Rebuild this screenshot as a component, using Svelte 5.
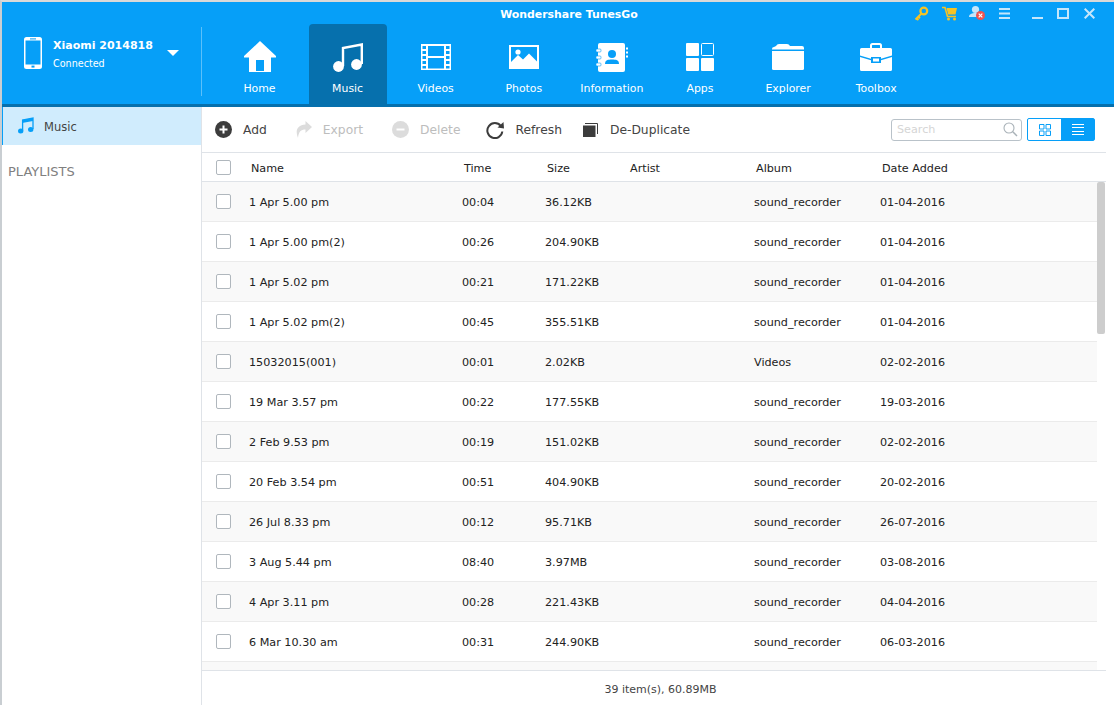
<script>
  const navItems = ["Home", "Music", "Videos", "Photos", "Information", "Apps", "Explorer", "Toolbox"];

  const tracks = [
    { name: "1 Apr 5.00 pm", time: "00:04", size: "36.12KB", album: "sound_recorder", date: "01-04-2016" },
    { name: "1 Apr 5.00 pm(2)", time: "00:26", size: "204.90KB", album: "sound_recorder", date: "01-04-2016" },
    { name: "1 Apr 5.02 pm", time: "00:21", size: "171.22KB", album: "sound_recorder", date: "01-04-2016" },
    { name: "1 Apr 5.02 pm(2)", time: "00:45", size: "355.51KB", album: "sound_recorder", date: "01-04-2016" },
    { name: "15032015(001)", time: "00:01", size: "2.02KB", album: "Videos", date: "02-02-2016" },
    { name: "19 Mar 3.57 pm", time: "00:22", size: "177.55KB", album: "sound_recorder", date: "19-03-2016" },
    { name: "2 Feb 9.53 pm", time: "00:19", size: "151.02KB", album: "sound_recorder", date: "02-02-2016" },
    { name: "20 Feb 3.54 pm", time: "00:51", size: "404.90KB", album: "sound_recorder", date: "20-02-2016" },
    { name: "26 Jul 8.33 pm", time: "00:12", size: "95.71KB", album: "sound_recorder", date: "26-07-2016" },
    { name: "3 Aug 5.44 pm", time: "08:40", size: "3.97MB", album: "sound_recorder", date: "03-08-2016" },
    { name: "4 Apr 3.11 pm", time: "00:28", size: "221.43KB", album: "sound_recorder", date: "04-04-2016" },
    { name: "6 Mar 10.30 am", time: "00:31", size: "244.90KB", album: "sound_recorder", date: "06-03-2016" }
  ];
</script>

<div class="window">
  <header class="header">
    <div class="titlebar">
      <span></span>
      <div class="title">Wondershare TunesGo</div>
      <div class="controls">
        <svg width="15" height="15" viewBox="0 0 15 15" aria-label="key">
          <circle cx="9.8" cy="5" r="3.4" fill="none" stroke="#f7c325" stroke-width="2.2" />
          <path d="M7.5 7.5 L1.5 13.5 M2.5 12.5 L4.5 14 M4.3 10.7 L6 12.2" fill="none" stroke="#f7c325" stroke-width="2" />
        </svg>
        <svg class="cart" width="16" height="15" viewBox="0 0 16 15" aria-label="cart">
          <path d="M0 1.5 H3 L5.5 10.5 H14" fill="none" stroke="#f7c325" stroke-width="1.6" />
          <path d="M4.5 2 H15 L13.5 8.5 H6.2 Z" fill="#f7c325" />
          <circle cx="6.5" cy="13" r="1.5" fill="#f7c325" />
          <circle cx="12.5" cy="13" r="1.5" fill="#f7c325" />
        </svg>
        <svg class="user" width="17" height="16" viewBox="0 0 17 16" aria-label="account">
          <circle cx="6.5" cy="4.5" r="3.6" fill="#c5e6fb" />
          <path d="M0 12 C0 9 3 8 6.5 8 C10 8 12 9 12 12 Z" fill="#c5e6fb" />
          <circle cx="11.5" cy="10.5" r="4.5" fill="#ef5350" />
          <path d="M9.7 8.7 L13.3 12.3 M13.3 8.7 L9.7 12.3" stroke="#fff" stroke-width="1.2" />
        </svg>
        <svg class="menu" width="12" height="11" viewBox="0 0 12 11" aria-label="menu">
          <path d="M0 1 H11 M0 5.5 H11 M0 10 H11" stroke="#c5e6fb" stroke-width="2" />
        </svg>
        <svg class="min" width="11" height="12" viewBox="0 0 11 12" aria-label="minimize">
          <path d="M0 11 H11" stroke="#c5e6fb" stroke-width="2" />
        </svg>
        <svg class="max" width="12" height="11" viewBox="0 0 12 11" aria-label="maximize">
          <rect x="1" y="1" width="10" height="9" fill="none" stroke="#c5e6fb" stroke-width="2" />
        </svg>
        <svg class="close" width="11" height="11" viewBox="0 0 11 11" aria-label="close">
          <path d="M.7 .7 L10.3 10.3 M10.3 .7 L.7 10.3" stroke="#c5e6fb" stroke-width="2" />
        </svg>
      </div>
    </div>

    <div class="headbar">
      <div class="device">
        <svg class="phone" width="18" height="32" viewBox="0 0 18 32">
          <rect width="18" height="32" rx="2.5" fill="#fff" />
          <rect x="1.5" y="3.5" width="15" height="24" fill="#069ff8" />
          <rect x="6" y="1.4" width="6" height="1" fill="#069ff8" />
          <rect x="7.5" y="28.6" width="3" height="2" fill="#069ff8" />
        </svg>
        <div class="device-text">
          <div class="device-name">Xiaomi 2014818</div>
          <div class="device-state">Connected</div>
        </div>
        <span class="caret"></span>
      </div>

      <nav class="nav">
        {#each navItems as item}
          <div class="nav-item" class:active={item === "Music"}>
            <div class="nav-icon">
              {#if item === "Home"}
                <svg width="32" height="32" viewBox="0 0 32 32">
                  <path d="M16 0 L32 15 L32 16.500 L27 16.500 L27 31 L5 31 L5 16.500 L0 16.500 L0 15 Z" fill="#fff" />
                  <rect x="12" y="19" width="8" height="11" fill="#069ff8" />
                </svg>
              {:else if item === "Music"}
                <svg width="30" height="30" viewBox="0 0 30 30">
                  <path d="M10 24 V6 L28.800 2.500 V22" fill="none" stroke="#fff" stroke-width="2.400" />
                  <circle cx="5.500" cy="24.500" r="5.400" fill="#fff" />
                  <circle cx="23.500" cy="22.500" r="5.400" fill="#fff" />
                </svg>
              {:else if item === "Videos"}
                <svg width="30" height="26" viewBox="1 1 30 26">
                  <path fill-rule="evenodd" fill="#fff" d="M1 1 H31 V27 H1 Z M2.5 3 V6 H6 V3 Z M2.5 8 V11 H6 V8 Z M2.5 13 V16 H6 V13 Z M2.5 18 V21 H6 V18 Z M2.5 23 V25.500 H6 V23 Z M26 3 V6 H29.500 V3 Z M26 8 V11 H29.500 V8 Z M26 13 V16 H29.500 V13 Z M26 18 V21 H29.500 V18 Z M26 23 V25.500 H29.500 V23 Z M8 3 V13 H24 V3 Z M8 15 V25.500 H24 V15 Z" />
                </svg>
              {:else if item === "Photos"}
                <svg width="30" height="24" viewBox="0 0 30 24">
                  <path fill-rule="evenodd" fill="#fff" d="M0 0 H30 V24 H0 Z M2 2 V17 L9 10 L14 14.500 L20 8.500 L28 16.500 V2 Z" />
                  <circle cx="9" cy="7" r="2.600" fill="#fff" />
                </svg>
              {:else if item === "Information"}
                <svg width="32" height="29" viewBox="0 0 32 29">
                  <rect x="2" y="0" width="27" height="29" rx="2" fill="#fff" />
                  <rect x="0" y="6" width="5" height="3" rx="1" fill="#fff" stroke="#069ff8" stroke-width=".6" />
                  <rect x="0" y="13" width="5" height="3" rx="1" fill="#fff" stroke="#069ff8" stroke-width=".6" />
                  <rect x="0" y="20" width="5" height="3" rx="1" fill="#fff" stroke="#069ff8" stroke-width=".6" />
                  <path d="M30 4.500 H32 V6.500 H30 Z M30 8.500 H32 V10.500 H30 Z M30 12.500 H32 V14.500 H30 Z" fill="#fff" />
                  <circle cx="16" cy="11" r="4" fill="#069ff8" />
                  <path d="M9 21 C9 17 12 16.500 16 16.500 C20 16.500 23 17 23 21 Z" fill="#069ff8" />
                </svg>
              {:else if item === "Apps"}
                <svg width="28" height="28" viewBox="0 0 28 28">
                  <rect x="0" y="0" width="13" height="13" rx="1" fill="#fff" />
                  <rect x="15.500" y=".5" width="12" height="12" rx="1" fill="none" stroke="#fff" />
                  <rect x="0" y="15" width="13" height="13" rx="1" fill="#fff" />
                  <rect x="15" y="15" width="13" height="13" rx="1" fill="#fff" />
                </svg>
              {:else if item === "Explorer"}
                <svg width="32" height="26" viewBox="0 0 32 26">
                  <path d="M0 5 Q0 3 2 3 L4 2 Q5 0 7 0 H15 Q17 0 18 2 H30 Q32 2 32 4 V5.500 H0 Z" fill="#fff" />
                  <path d="M0 7 H32 V24.500 Q32 26 30.500 26 H1.500 Q0 26 0 24.500 Z" fill="#fff" />
                </svg>
              {:else}
                <svg width="32" height="28" viewBox="0 0 32 28">
                  <path d="M11 5 V2.500 Q11 1 12.500 1 H19.500 Q21 1 21 2.500 V5" fill="none" stroke="#fff" stroke-width="2" />
                  <path d="M0 6.500 Q0 5 1.500 5 H30.500 Q32 5 32 6.500 V12.500 L21 15.800 V14 H11 V15.800 L0 12.500 Z" fill="#fff" />
                  <path d="M0 14 L11 17.300 V20 H21 V17.300 L32 14 V26.500 Q32 28 30.500 28 H1.500 Q0 28 0 26.500 Z" fill="#fff" />
                  <rect x="13" y="15.500" width="6" height="3" fill="#fff" />
                </svg>
              {/if}
            </div>
            <div class="nav-label">{item}</div>
          </div>
        {/each}
      </nav>
    </div>
  </header>

  <div class="content">
    <aside class="sidebar">
      <div class="side-item">
        <svg width="16" height="17" viewBox="0 0 16 17">
          <path d="M4.600 13.500 V3 L15 1 V12" fill="none" stroke="#069ff8" stroke-width="1.300" />
          <path d="M4 3 L15 1 V4 L4 6 Z" fill="#069ff8" />
          <ellipse cx="2.700" cy="14" rx="2.700" ry="2.500" fill="#069ff8" />
          <ellipse cx="12.700" cy="12.500" rx="2.700" ry="2.500" fill="#069ff8" />
        </svg>
        <span>Music</span>
      </div>
      <div class="side-heading">PLAYLISTS</div>
    </aside>

    <main class="main">
      <div class="toolbar">
        <div class="tool">
          <svg width="17" height="17" viewBox="0 0 17 17">
            <circle cx="8.500" cy="8.500" r="8.500" fill="#3c3c3c" />
            <path d="M8.500 4.500 V12.500 M4.500 8.500 H12.500" stroke="#fff" stroke-width="2" />
          </svg>
          <span>Add</span>
        </div>
        <div class="tool off export">
          <svg width="16" height="17" viewBox="0 0 16 17">
            <path d="M9.500 0 L16 6 L9.500 12 V8.500 C5 8.500 2.500 10.500 2 17 C-1 10 1 4 9.500 3.500 Z" fill="#dcdcdc" />
          </svg>
          <span>Export</span>
        </div>
        <div class="tool off delete">
          <svg width="17" height="17" viewBox="0 0 17 17">
            <circle cx="8.500" cy="8.500" r="8.500" fill="#dcdcdc" />
            <path d="M4.500 8.500 H12.500" stroke="#fff" stroke-width="2" />
          </svg>
          <span>Delete</span>
        </div>
        <div class="tool refresh">
          <svg width="18" height="18" viewBox="0 0 18 18">
            <path d="M14.800 5 A7.500 7.500 0 1 0 16.300 10.500" fill="none" stroke="#3c3c3c" stroke-width="2" />
            <path d="M11.500 6.500 L18 7.500 L17.500 1 Z" fill="#3c3c3c" />
          </svg>
          <span>Refresh</span>
        </div>
        <div class="tool dedupe">
          <svg width="15" height="14" viewBox="0 0 15 14">
            <rect x="0" y="2.500" width="12.500" height="11.500" fill="#3c3c3c" />
            <path d="M2 .5 H14.500 V11" fill="none" stroke="#3c3c3c" />
          </svg>
          <span>De-Duplicate</span>
        </div>

        <div class="tool-right">
          <div class="search">
            <span>Search</span>
            <svg width="15" height="15" viewBox="0 0 15 15">
              <circle cx="6" cy="6" r="5" fill="none" stroke="#a9b2b8" stroke-width="1.100" />
              <path d="M9.800 9.800 L14 14" stroke="#a9b2b8" stroke-width="1.500" />
            </svg>
          </div>
          <div class="toggle">
            <div class="toggle-btn">
              <svg width="12" height="12" viewBox="0 0 12 12">
                <path d="M.5 .5 H5 V5 H.5 Z M7 .5 H11.500 V5 H7 Z M.5 7 H5 V11.500 H.5 Z M7 7 H11.500 V11.500 H7 Z" fill="none" stroke="#069ff8" />
              </svg>
            </div>
            <div class="toggle-btn on">
              <svg width="12" height="11" viewBox="0 0 12 11">
                <path d="M0 .5 H12 M0 3.500 H12 M0 7.500 H12 M0 10.500 H12" stroke="#fff" />
              </svg>
            </div>
          </div>
        </div>
      </div>

      <div class="thead">
        <span class="check"></span>
        <span class="cell">Name</span>
        <span class="cell">Time</span>
        <span class="cell">Size</span>
        <span class="cell">Artist</span>
        <span class="cell">Album</span>
        <span class="cell">Date Added</span>
      </div>

      <div class="list">
        <div class="rows">
          {#each tracks as track}
            <div class="row">
              <span class="check"></span>
              <span class="cell">{track.name}</span>
              <span class="cell">{track.time}</span>
              <span class="cell">{track.size}</span>
              <span class="cell"></span>
              <span class="cell">{track.album}</span>
              <span class="cell">{track.date}</span>
            </div>
          {/each}
          <div class="row-stub"></div>
        </div>
        <div class="scrollbar"><div class="thumb"></div></div>
      </div>

      <footer class="footer">39 item(s), 60.89MB</footer>
    </main>
  </div>
</div>

<style>
  :global(body) {
    margin: 0;
    background: #fff;
  }
  .window {
    width: 1114px;
    height: 705px;
    box-sizing: border-box;
    border-top: 2px solid #d9d9d9;
    border-left: 2px solid #c9ced2;
    display: flex;
    flex-direction: column;
    overflow: hidden;
    font-family: "DejaVu Sans", sans-serif;
    font-size: 11.2px;
    color: #222;
  }

  .header {
    height: 105px;
    flex: none;
    box-sizing: border-box;
    background: #069ff8;
    border-bottom: 3px solid #0670ad;
    color: #fff;
  }
  .titlebar {
    height: 22px;
    display: grid;
    grid-template-columns: 1fr auto 1fr;
    align-items: center;
    padding-left: 22px;
  }
  .title {
    font-weight: bold;
    font-size: 10.9px;
    padding-top: 2px;
  }
  .controls {
    display: flex;
    align-items: center;
    justify-content: flex-end;
    padding-right: 19px;
  }
  .cart { margin-left: 13px; }
  .user { margin-left: 11px; }
  .menu { margin-left: 13px; }
  .min { margin-left: 21px; }
  .max { margin-left: 14px; }
  .close { margin-left: 15px; }

  .headbar {
    display: flex;
    height: 80px;
  }
  .device {
    width: 200px;
    flex: none;
    height: 69px;
    margin-top: 3px;
    box-sizing: border-box;
    border-right: 1px solid #5cc0fa;
    display: flex;
    align-items: center;
    padding: 0 0 16px 22px;
  }
  .phone {
    margin-top: -2px;
  }
  .device-text {
    margin: 2px 0 0 11px;
    width: 114px;
  }
  .device-name {
    font-weight: bold;
    font-size: 11px;
    line-height: 18px;
  }
  .device-state {
    font-size: 9.6px;
    line-height: 18px;
  }
  .caret {
    width: 0;
    height: 0;
    border-left: 6px solid transparent;
    border-right: 6px solid transparent;
    border-top: 6px solid #fff;
    margin-top: -2px;
  }
  .nav {
    display: flex;
    gap: 10.1px;
    padding-left: 18.5px;
  }
  .nav-item {
    width: 78px;
    height: 80px;
    border-radius: 4px 4px 0 0;
    display: flex;
    flex-direction: column;
    align-items: center;
  }
  .nav-item.active {
    background: #0670ad;
  }
  .nav-icon {
    height: 34px;
    margin-top: 16px;
    display: flex;
    align-items: center;
    justify-content: center;
  }
  .nav-label {
    font-size: 10.9px;
    line-height: 16px;
    margin-top: 7px;
  }

  .content {
    flex: 1;
    display: flex;
    min-height: 0;
  }
  .sidebar {
    width: 200px;
    flex: none;
    box-sizing: border-box;
    border-right: 1px solid #dfe3e8;
  }
  .side-item {
    height: 38px;
    box-sizing: border-box;
    background: #d0ecfd;
    border-left: 1px solid #069ff8;
    display: flex;
    align-items: center;
    padding: 2px 0 0 15px;
    gap: 10px;
    color: #444;
    font-size: 11.5px;
  }
  .side-item svg {
    margin-top: -3px;
  }
  .side-heading {
    margin: 19px 0 0 6px;
    color: #808080;
    font-size: 13px;
    line-height: 16px;
  }

  .main {
    flex: 1;
    min-width: 0;
    display: flex;
    flex-direction: column;
  }
  .toolbar {
    height: 45px;
    flex: none;
    display: flex;
    align-items: center;
    padding-left: 13px;
    gap: 28px;
    padding-right: 19px;
  }
  .tool {
    display: flex;
    align-items: center;
    gap: 11px;
    font-size: 12.3px;
    color: #444;
  }
  .tool.off {
    color: #bdbdbd;
  }
  .export, .delete {
    margin-left: 1px;
  }
  .refresh {
    margin-left: -2px;
  }
  .dedupe {
    margin-left: -7px;
    gap: 12px;
  }
  .tool-right {
    margin-left: auto;
    display: flex;
    align-items: center;
    gap: 5px;
  }
  .search {
    width: 131px;
    height: 22px;
    box-sizing: border-box;
    border: 1px solid #b9c2c9;
    border-radius: 3px;
    display: flex;
    align-items: center;
    justify-content: space-between;
    padding: 0 3px 0 5px;
    color: #d5d5d5;
    font-size: 11.2px;
  }
  .toggle {
    width: 68px;
    height: 23px;
    box-sizing: border-box;
    border: 1px solid #069ff8;
    border-radius: 2px;
    display: flex;
  }
  .toggle-btn {
    flex: 1;
    display: flex;
    align-items: center;
    justify-content: center;
  }
  .toggle-btn.on {
    background: #069ff8;
  }

  .thead, .row {
    display: grid;
    grid-template-columns: 47px 213px 83px 83px 126px 126px 1fr;
    align-items: center;
    box-sizing: border-box;
  }
  .cell {
    margin-top: 2px;
  }
  .thead {
    height: 30px;
    flex: none;
    width: 904px;
    padding-left: 2px;
    border-top: 1px solid #dfe3e8;
    border-bottom: 1px solid #dfe3e8;
  }
  .thead .check {
    margin-left: 12px;
  }
  .check {
    width: 15px;
    height: 15px;
    box-sizing: border-box;
    border: 1px solid #b0b7bd;
    border-radius: 2px;
    margin-left: 14px;
    background: #fff;
  }
  .list {
    flex: 1;
    min-height: 0;
    display: flex;
    overflow: hidden;
    width: 904px;
  }
  .rows {
    width: 895px;
    flex: none;
  }
  .row {
    height: 40px;
    border-bottom: 1px solid #ebebeb;
  }
  .row:nth-child(odd), .row-stub {
    background: #f9f9f9;
  }
  .row-stub {
    height: 8px;
  }
  .scrollbar {
    width: 8px;
    flex: none;
  }
  .thumb {
    height: 152px;
    background: #cdcdcd;
    border-radius: 2px;
  }
  .footer {
    height: 35px;
    flex: none;
    width: 904px;
    box-sizing: border-box;
    border-top: 1px solid #dfe3e8;
    padding: 2px 0 0 13px;
    font-size: 11px;
    color: #444;
    display: flex;
    align-items: center;
    justify-content: center;
  }
</style>
